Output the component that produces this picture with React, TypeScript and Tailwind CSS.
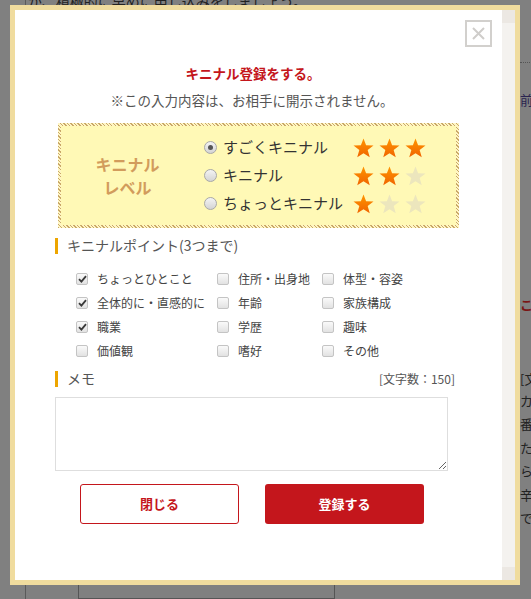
import React from 'react'

const LEVELS = [
  { label: 'すごくキニナル', stars: 3, checked: true },
  { label: 'キニナル', stars: 2, checked: false },
  { label: 'ちょっとキニナル', stars: 1, checked: false },
]

const POINTS = [
  ['ちょっとひとこと', true], ['住所・出身地', false], ['体型・容姿', false],
  ['全体的に・直感的に', true], ['年齢', false], ['家族構成', false],
  ['職業', true], ['学歴', false], ['趣味', false],
  ['価値観', false], ['嗜好', false], ['その他', false],
] as const

function Star({ on }: { on: boolean }) {
  return (
    <svg width="21" height="20" viewBox="0 0 24 23">
      <defs>
        <linearGradient id="starOn" x1="0" y1="0" x2="0" y2="1">
          <stop offset="0" stopColor="#ff9500" />
          <stop offset="1" stopColor="#f06400" />
        </linearGradient>
      </defs>
      <polygon
        points="12,0.5 15,8.3 23.5,8.6 16.8,13.9 19.2,22.2 12,17.4 4.8,22.2 7.2,13.9 0.5,8.6 9,8.3"
        fill={on ? 'url(#starOn)' : '#ece6bd'}
      />
    </svg>
  )
}

function Radio({ checked }: { checked: boolean }) {
  return (
    <span className="w-[13px] h-[13px] rounded-full border border-[#a8a8a8] bg-gradient-to-b from-[#f4f4f4] to-[#d4d4d4] flex items-center justify-center shrink-0">
      {checked && <span className="w-[5px] h-[5px] rounded-full bg-[#555]" />}
    </span>
  )
}

function Check({ checked }: { checked: boolean }) {
  return (
    <span className="w-[12px] h-[12px] rounded-[2px] border border-[#c4c4c4] bg-gradient-to-b from-[#fafafa] to-[#e2e2e2] flex items-center justify-center shrink-0">
      {checked && (
        <svg width="9" height="8" viewBox="0 0 9 8">
          <path d="M1 4.2 L3.4 6.6 L8 1.2" stroke="#3a3a3a" strokeWidth="1.8" fill="none" />
        </svg>
      )}
    </span>
  )
}

function Heading({ children }: { children: React.ReactNode }) {
  return (
    <div className="flex items-center gap-[9px]">
      <span className="w-[3px] h-[16px] bg-[#eda500]" />
      <span className="text-[14px] text-[#555]">{children}</span>
    </div>
  )
}

export default function App() {
  return (
    <div className="relative w-[531px] h-[599px] overflow-hidden bg-[#808080] font-['Noto_Sans_CJK_JP','Noto_Sans',sans-serif]">
      {/* page behind the overlay */}
      <div className="flex h-full">
        <div className="w-[520px] shrink-0 flex flex-col border-l border-[#5a5a5a] ml-[25px]">
          <p className="-mt-[9px] ml-[2px] text-[14px] text-[#222] whitespace-nowrap">が、積極的に早めに申し込みをしましょう。</p>
          <div className="mt-auto ml-[52px] w-[257px] h-[14px] border-l border-b border-r border-[#555]" />
        </div>
        <div className="flex flex-col text-[13px] text-[#222] whitespace-nowrap -ml-[25px]">
          <div className="mt-[62px] border-t border-dotted border-[#555] w-[40px]" />
          <p className="mt-[27px] text-[#2a2450]">前の</p>
          <p className="mt-[185px] font-bold text-[#7a1515]">こち</p>
          <p className="mt-[55px]">[文</p>
          <p className="mt-[2px]">カ</p>
          <p className="mt-[4px]">番組</p>
          <p className="mt-[4px]">た</p>
          <p className="mt-[4px]">ら</p>
          <p className="mt-[4px]">辛</p>
          <p className="mt-[4px]">で</p>
        </div>
      </div>

      {/* modal */}
      <div className="absolute left-[10px] top-[5px] w-[510px] h-[580px] bg-[#f0dc9e] p-[5px] flex">
        <div className="relative flex-1 bg-white flex flex-col pl-[40px]">
          <button className="absolute right-[10px] top-[10px] w-[27px] h-[27px] border-2 border-[#d2d0cd] flex items-center justify-center">
            <svg width="13" height="13" viewBox="0 0 13 13">
              <path d="M1 1 L12 12 M12 1 L1 12" stroke="#cfcdca" strokeWidth="2" />
            </svg>
          </button>

          <div className="w-[400px] flex flex-col">
            <p className="mt-[53px] text-center text-[13.5px] font-bold text-[#c4161c] leading-[20px] -ml-[4px]">キニナル登録をする。</p>
            <p className="mt-[7px] text-center text-[13.5px] text-[#555] leading-[20px] -ml-[6px]">※この入力内容は、お相手に開示されません。</p>

            <div className="mt-[13px] ml-[3px] w-[401px] h-[105px] p-[3px] bg-[repeating-linear-gradient(45deg,#c9a868_0px,#c9a868_1px,#fff6c4_1px,#fff6c4_2.5px)]">
              <div className="h-full bg-[#fff9b6] flex items-center">
                <div className="w-[143px] flex flex-col items-center text-[16px] font-bold text-[#d29c5c] leading-[23px] pr-[10px]">
                  <span>キニナル</span>
                  <span>レベル</span>
                </div>
                <div className="flex flex-col gap-[7px]">
                  {LEVELS.map((l) => (
                    <div key={l.label} className="flex items-center h-[21px]">
                      <Radio checked={l.checked} />
                      <span className="ml-[6px] w-[130px] text-[15px] text-[#333]">{l.label}</span>
                      <div className="flex gap-[5px]">
                        {[0, 1, 2].map((i) => <Star key={i} on={i < l.stars} />)}
                      </div>
                    </div>
                  ))}
                </div>
              </div>
            </div>

            <div className="mt-[7px]">
              <Heading>キニナルポイント(3つまで)</Heading>
            </div>

            <div className="mt-[14px] ml-[21px] grid grid-cols-[141px_105px_auto] gap-y-[7px]">
              {POINTS.map(([label, checked]) => (
                <label key={label} className="flex items-center h-[17px]">
                  <Check checked={checked} />
                  <span className="ml-[9px] text-[12px] text-[#444] whitespace-nowrap">{label}</span>
                </label>
              ))}
            </div>

            <div className="mt-[9px] flex items-center justify-between">
              <Heading>メモ</Heading>
              <span className="text-[12px] text-[#555]">[文字数：150]</span>
            </div>

            <textarea className="mt-[8px] w-[393px] h-[74px] border border-[#dedede] resize-y" />

            <div className="mt-[13px] ml-[25px] flex gap-[26px]">
              <button className="w-[159px] h-[40px] rounded-[3px] border border-[#c4161c] bg-white text-[13px] font-bold text-[#c4161c]">閉じる</button>
              <button className="w-[159px] h-[40px] rounded-[3px] bg-[#c4161c] text-[13px] font-bold text-white">登録する</button>
            </div>
          </div>
        </div>
        <div className="w-[13px] flex flex-col bg-[#f4f2ef]">
          <div className="h-[13px] bg-[#ece8e3]" />
          <div className="flex-1" />
          <div className="h-[13px] bg-[#ece8e3]" />
        </div>
      </div>
    </div>
  )
}
